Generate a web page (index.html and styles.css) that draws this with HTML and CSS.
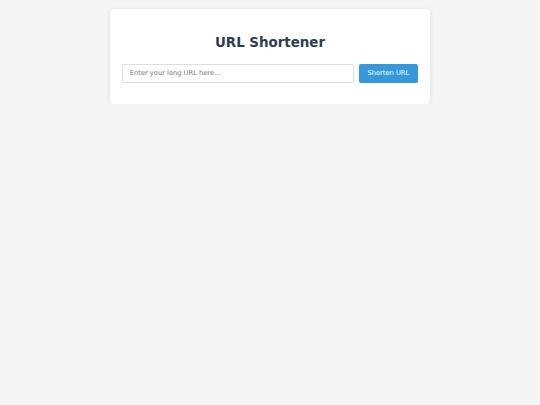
FILE: index.html
```html
<!DOCTYPE html>
<html>
<head>
<meta charset="utf-8">
<link rel="stylesheet" href="styles.css">
</head>
<body>
<div class="card">
  <h1 class="title">URL Shortener</h1>
  <form class="form">
    <input class="url-input" type="text" placeholder="Enter your long URL here...">
    <button class="btn" type="button">Shorten URL</button>
  </form>
</div>
</body>
</html>
```
FILE: styles.css
```css
html, body {
  margin: 0;
  padding: 0;
  background: #f5f5f5;
  font-family: "DejaVu Sans", Verdana, sans-serif;
}
body {
  padding-top: 8.5px;
}
.card {
  width: 320px;
  box-sizing: border-box;
  margin: 0 auto;
  background: #fff;
  border-radius: 4px;
  box-shadow: 0 1px 5px rgba(0, 0, 0, 0.1);
  padding: 26.5px 12.3px 21px;
}
.title {
  margin: 0 0 13.5px;
  text-align: center;
  font-size: 13.4px;
  font-weight: bold;
  color: #2c3e50;
  line-height: normal;
}
.form {
  display: flex;
  gap: 5px;
  margin: 0;
}
.url-input {
  flex: 1;
  height: 19px;
  box-sizing: border-box;
  border: 1px solid #ddd;
  border-radius: 2px;
  padding: 0 6.5px;
  font-family: "DejaVu Sans", Verdana, sans-serif;
  font-size: 6.7px;
  color: #333;
  outline: none;
}
.url-input::placeholder {
  color: #757575;
}
.btn {
  height: 19px;
  box-sizing: border-box;
  border: none;
  border-radius: 2px;
  background: #3498db;
  color: #fff;
  padding: 0 8.5px;
  font-family: "DejaVu Sans", Verdana, sans-serif;
  font-size: 6.7px;
  cursor: pointer;
}
```
